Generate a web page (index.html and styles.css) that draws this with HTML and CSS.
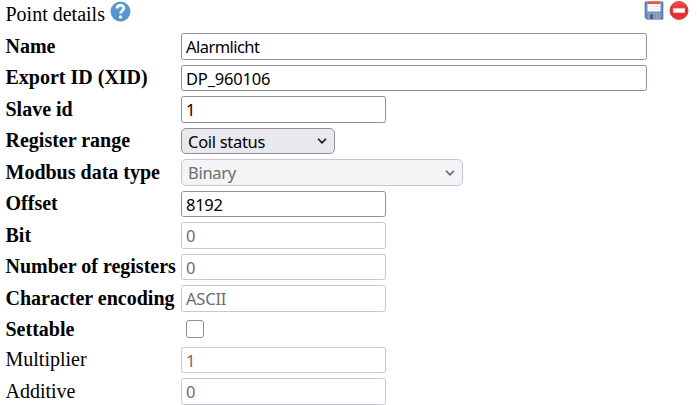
FILE: index.html
```
<!DOCTYPE html>
<html lang="en">
<head>
<meta charset="utf-8">
<title>Point details</title>
<link rel="stylesheet" href="styles.css">
</head>
<body>
<form class="details">
  <header class="head">
    <span class="title">Point details</span>
    <svg class="help" width="21" height="21" viewBox="0 0 21 21">
      <defs><linearGradient id="blue" x1="0" y1="0" x2="0" y2="1"><stop offset="0" stop-color="#5a9bd0"/><stop offset="1" stop-color="#5293cb"/></linearGradient></defs>
      <circle cx="10.5" cy="10.5" r="10" fill="url(#blue)"/>
      <path d="M7 7.5C7 3.4 13.8 3.4 13.8 7.1C13.8 9.6 10.5 9.8 10.5 12.6" fill="none" stroke="#fff" stroke-width="2.7"/>
      <circle cx="10.5" cy="16" r="1.7" fill="#fff"/>
    </svg>
    <span class="actions">
      <svg width="20" height="20" viewBox="0 0 20 20">
        <path d="M1.2 1H18.8V18H2.7L1.2 16.7Z" fill="#6791c8" stroke="#48699b"/>
        <rect x="3.5" y="1" width="13" height="9.5" fill="#fff"/>
        <rect x="3.5" y=".5" width="13" height="2.6" fill="#e3593f"/>
        <path d="M5 5.5h10M5 8h10" stroke="#e1e4e8"/>
        <rect x="4.5" y="12" width="11.5" height="6.2" fill="#9da6ae"/>
        <rect x="6" y="13" width="3.2" height="5" fill="#3f6194"/>
        <path d="M11.5 13v5M14 13v5" stroke="#848d95"/>
      </svg>
      <svg width="20" height="20" viewBox="0 0 20 20">
        <defs><linearGradient id="red" x1="0" y1="0" x2="0" y2="1"><stop offset="0" stop-color="#ee5555"/><stop offset=".5" stop-color="#dc2525"/><stop offset="1" stop-color="#e53a36"/></linearGradient></defs>
        <circle cx="10" cy="9.5" r="9" fill="url(#red)" stroke="#dc3b38"/>
        <rect x="4" y="7.2" width="12" height="4.6" rx=".5" fill="#fff" stroke="#e99" stroke-width=".5"/>
      </svg>
    </span>
  </header>
  <div class="row"><label for="name">Name</label><input class="field wide name" id="name" value="Alarmlicht"></div>
  <div class="row"><label for="xid">Export ID (XID)</label><input class="field wide numeric" id="xid" value="DP_960106"></div>
  <div class="row"><label for="slave">Slave id</label><input class="field" id="slave" value="1"></div>
  <div class="row"><label for="range">Register range</label>
    <span class="picker"><select class="field select" id="range"><option>Coil status</option></select><svg class="chevron" width="10" height="6" viewBox="0 0 10 6"><path d="M1 .8L5 4.8L9 .8"/></svg></span></div>
  <div class="row"><label for="type">Modbus data type</label>
    <span class="picker type"><select class="field select" id="type" disabled><option>Binary</option></select><svg class="chevron" width="10" height="6" viewBox="0 0 10 6"><path d="M1 .8L5 4.8L9 .8"/></svg></span></div>
  <div class="row"><label for="offset">Offset</label><input class="field" id="offset" value="8192"></div>
  <div class="row"><label for="bit">Bit</label><input class="field" id="bit" value="0" disabled></div>
  <div class="row"><label for="count">Number of registers</label><input class="field" id="count" value="0" disabled></div>
  <div class="row"><label for="encoding">Character encoding</label><input class="field numeric" id="encoding" value="ASCII" disabled></div>
  <div class="row short"><label for="settable">Settable</label><input class="check" id="settable" type="checkbox"></div>
  <div class="row optional"><label for="multiplier">Multiplier</label><input class="field" id="multiplier" value="1" disabled></div>
  <div class="row optional"><label for="additive">Additive</label><input class="field" id="additive" value="0" disabled></div>
</form>
</body>
</html>
```
FILE: styles.css
```
* { box-sizing: border-box; }
body {
  margin: 0;
  overflow: hidden;
  background: #fff;
  color: #000;
  font: 20px/26px "Liberation Serif", serif;
}
.head {
  display: flex;
  height: 30.75px;
  padding: 1px 8px 0 5.5px;
}
.title { width: 99.5px; white-space: nowrap; }
.help { margin-left: 5px; }
.actions { display: flex; gap: 5px; margin-left: auto; }
.row {
  display: grid;
  grid-template-columns: 175.5px 1fr;
  align-items: center;
  height: 31.5px;
  padding-left: 5.5px;
}
.row label { padding-bottom: 2px; font-weight: bold; white-space: nowrap; }
.row.optional label { font-weight: normal; }
.row.short { height: 30px; }
.row.short label { padding-bottom: 0; }
.field {
  display: block;
  width: 205px;
  height: 26.5px;
  margin: 0;
  padding: 1px 4px;
  border: 1px solid #8f8f9d;
  border-radius: 2.5px;
  background: #fff;
  color: #000;
  font: 16.5px/22px "Noto Sans", sans-serif;
  letter-spacing: -0.3px;
}
.field:disabled { border-color: #c7c7ce; color: #6d6d6d; opacity: 1; }
.wide { width: 466px; }
.name { letter-spacing: -0.55px; }
.numeric { letter-spacing: -0.2px; }
.picker { display: grid; width: 154px; align-items: center; }
.picker.type { width: 282px; }
.picker > * { grid-area: 1 / 1; }
.select {
  width: 100%;
  padding: 1px 6px 0;
  border-radius: 5px;
  background: #e9e9ed;
  appearance: none;
}
.select:disabled { background: #f4f4f6; }
.chevron {
  justify-self: end;
  margin-right: 8px;
  fill: none;
  stroke: #111;
  stroke-width: 1.6;
  pointer-events: none;
}
.type .chevron { stroke: #666; }
.check {
  width: 18px;
  height: 18px;
  margin: 0 0 0 5px;
  border: 1px solid #8f8f9d;
  border-radius: 3px;
  background: #fff;
  appearance: none;
}
```
